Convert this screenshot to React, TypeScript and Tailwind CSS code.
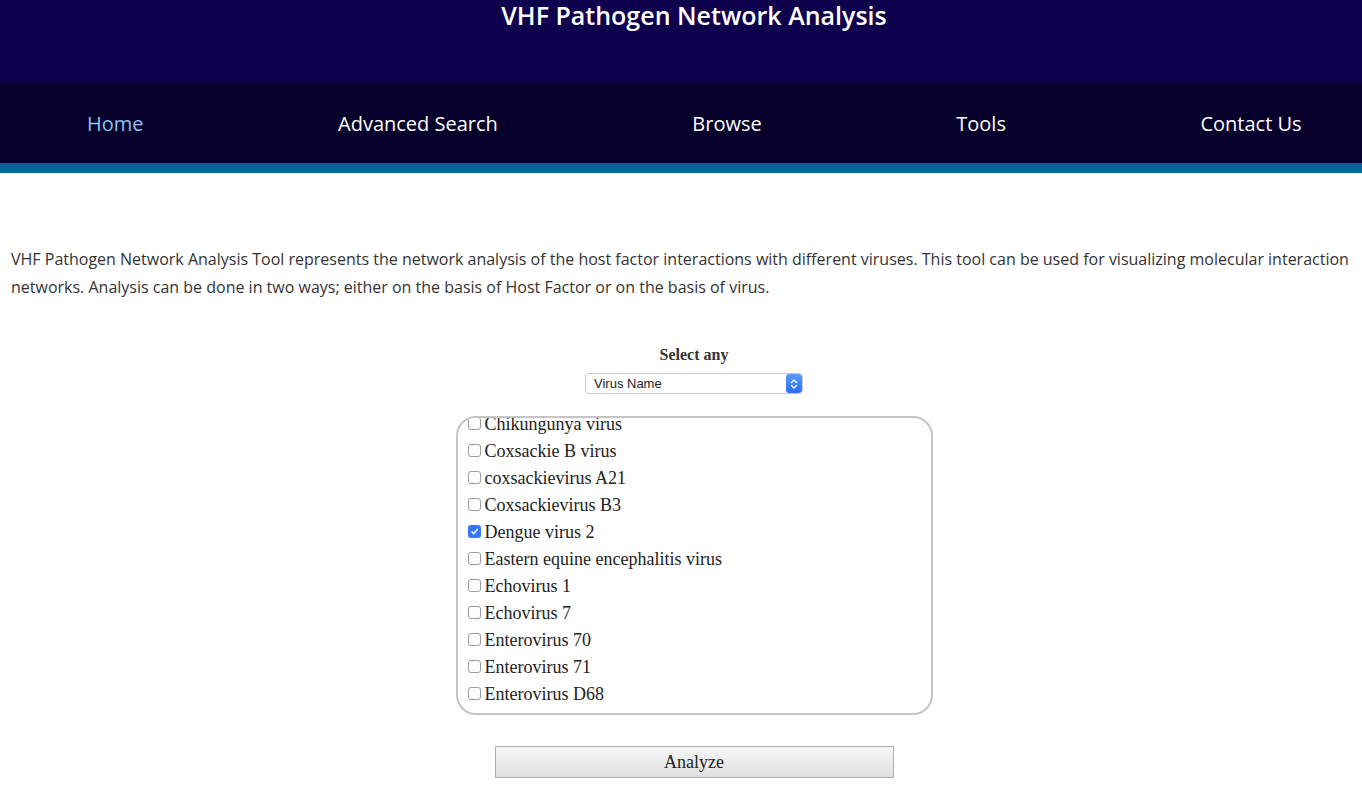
import React from "react";

const viruses: [string, boolean][] = [
  ["Chikungunya virus", false],
  ["Coxsackie B virus", false],
  ["coxsackievirus A21", false],
  ["Coxsackievirus B3", false],
  ["Dengue virus 2", true],
  ["Eastern equine encephalitis virus", false],
  ["Echovirus 1", false],
  ["Echovirus 7", false],
  ["Enterovirus 70", false],
  ["Enterovirus 71", false],
  ["Enterovirus D68", false],
];

function Check({ checked }: { checked: boolean }) {
  if (checked) {
    return (
      <span className="w-[13px] h-[13px] rounded-[3px] bg-[#3478f6] flex items-center justify-center shrink-0">
        <svg width="9" height="9" viewBox="0 0 9 9">
          <path d="M1.8 4.8 L3.7 6.8 L7.4 2.2" fill="none" stroke="white" strokeWidth="1.4" strokeLinecap="round" strokeLinejoin="round" />
        </svg>
      </span>
    );
  }
  return <span className="w-[13px] h-[13px] rounded-[3px] border border-[#9a9a9a] bg-white shrink-0" />;
}

export default function App() {
  return (
    <div className="w-[1362px] min-h-[796px] bg-white">
      <header className="h-[83px] bg-[#0f004e] flex justify-center pl-[26px]">
        <h1 className="text-white text-[25px] font-semibold leading-[30px] [font-family:'Open_Sans',sans-serif]">
          VHF Pathogen Network Analysis
        </h1>
      </header>
      <nav className="h-[80px] bg-[#07002a] flex items-center pt-[1px] pl-[87px] gap-[194.5px] [font-family:'Open_Sans',sans-serif] text-[20px] text-white">
        <span className="text-[#8cc4f2]">Home</span>
        <span>Advanced Search</span>
        <span>Browse</span>
        <span>Tools</span>
        <span>Contact Us</span>
      </nav>
      <div className="h-[10px] bg-[#006699]" />
      <p className="mt-[72px] px-[11px] text-[16px] leading-[28px] text-[#333] [font-family:'Open_Sans',sans-serif]">
        VHF Pathogen Network Analysis Tool represents the network analysis of the host factor interactions with different viruses. This tool can be used for visualizing molecular interaction networks. Analysis can be done in two ways; either on the basis of Host Factor or on the basis of virus.
      </p>
      <div className="flex flex-col items-center mt-[44px] pl-[26px] [font-family:'Liberation_Serif',serif]">
        <div className="text-[16px] font-bold leading-[20px] text-[#333]">Select any</div>
        <div className="mt-[8px] w-[218px] h-[21px] border border-[#c8c8c8] rounded-[4px] bg-white flex items-center justify-between overflow-hidden">
          <span className="pl-[8px] text-[13px] text-[#222] [font-family:'Liberation_Sans',sans-serif]">Virus Name</span>
          <span className="w-[16px] h-full bg-gradient-to-b from-[#5a9bff] to-[#2a6ef5] rounded-[3px] flex items-center justify-center">
            <svg width="8" height="12" viewBox="0 0 8 12">
              <path d="M1.5 4.5 L4 2 L6.5 4.5 M1.5 7.5 L4 10 L6.5 7.5" fill="none" stroke="white" strokeWidth="1.3" strokeLinecap="round" strokeLinejoin="round" />
            </svg>
          </span>
        </div>
        <div className="mt-[22px] w-[477px] h-[299px] border-2 border-[#c4c4c4] rounded-[20px] overflow-hidden pl-[10px]">
          <div className="-mt-[8px]">
            {viruses.map(([name, c]) => (
              <div key={name} className="h-[27px] flex items-center gap-[4px] text-[18px] text-[#222]">
                <Check checked={c} />
                <span className="leading-[20px]">{name}</span>
              </div>
            ))}
          </div>
        </div>
        <button className="mt-[31px] w-[399px] h-[32px] border border-[#adadad] bg-gradient-to-b from-[#f6f6f6] via-[#ebebeb] to-[#e0e0e0] text-[18px] text-[#222] [font-family:'Liberation_Serif',serif]">
          Analyze
        </button>
      </div>
    </div>
  );
}
